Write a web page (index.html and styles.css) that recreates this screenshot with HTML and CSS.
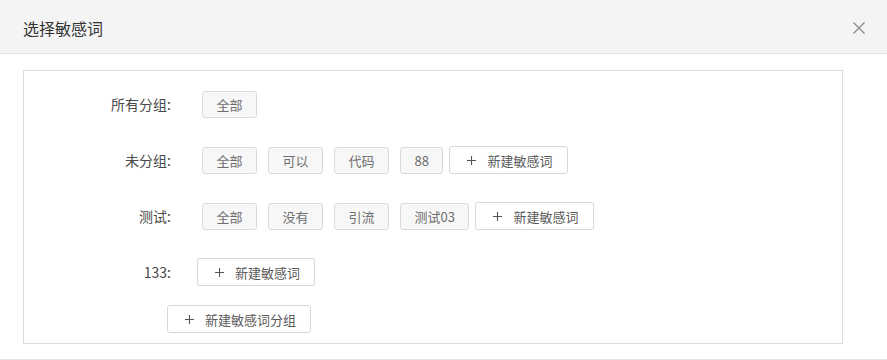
FILE: index.html
```html
<!DOCTYPE html>
<html lang="zh-CN">
<head>
<meta charset="utf-8">
<title>选择敏感词</title>
<link rel="stylesheet" href="styles.css">
</head>
<body>
<div class="dialog">
  <div class="dialog-header">
    <span class="dialog-title">选择敏感词</span>
    <button class="dialog-close" aria-label="关闭">
      <svg width="12" height="12" viewBox="0 0 12 12"><path d="M0.5 0.5 L11.5 11.5 M11.5 0.5 L0.5 11.5" stroke="#8a8a8a" stroke-width="1.3" fill="none"/></svg>
    </button>
  </div>
  <div class="dialog-body">
    <div class="group-box">
      <div class="group-row">
        <div class="group-label">所有分组:</div>
        <div class="group-items">
          <span class="tag">全部</span>
        </div>
      </div>
      <div class="group-row">
        <div class="group-label">未分组:</div>
        <div class="group-items">
          <span class="tag">全部</span>
          <span class="tag">可以</span>
          <span class="tag">代码</span>
          <span class="tag">88</span>
          <span class="add-btn"><svg class="plus" width="9" height="9" viewBox="0 0 9 9"><path d="M4.5 0 V9 M0 4.5 H9" stroke="#555" stroke-width="1.1" fill="none"/></svg>新建敏感词</span>
        </div>
      </div>
      <div class="group-row">
        <div class="group-label">测试:</div>
        <div class="group-items">
          <span class="tag">全部</span>
          <span class="tag">没有</span>
          <span class="tag">引流</span>
          <span class="tag">测试03</span>
          <span class="add-btn"><svg class="plus" width="9" height="9" viewBox="0 0 9 9"><path d="M4.5 0 V9 M0 4.5 H9" stroke="#555" stroke-width="1.1" fill="none"/></svg>新建敏感词</span>
        </div>
      </div>
      <div class="group-row">
        <div class="group-label">133:</div>
        <div class="group-items">
          <span class="add-btn"><svg class="plus" width="9" height="9" viewBox="0 0 9 9"><path d="M4.5 0 V9 M0 4.5 H9" stroke="#555" stroke-width="1.1" fill="none"/></svg>新建敏感词</span>
        </div>
      </div>
      <div class="group-add-row">
        <span class="add-btn add-group"><svg class="plus" width="9" height="9" viewBox="0 0 9 9"><path d="M4.5 0 V9 M0 4.5 H9" stroke="#555" stroke-width="1.1" fill="none"/></svg>新建敏感词分组</span>
      </div>
    </div>
  </div>
  <div class="dialog-footer"></div>
</div>
</body>
</html>
```

FILE: styles.css
```css
* { box-sizing: border-box; }
html, body {
  margin: 0;
  padding: 0;
  background: #ffffff;
  font-family: "Noto Sans CJK SC", "Noto Sans", sans-serif;
  color: #333;
}
.dialog {
  width: 887px;
  height: 360px;
  overflow: hidden;
  background: #fff;
}
.dialog-header {
  height: 54px;
  background: #f4f4f4;
  border-bottom: 1px solid #e4e4e4;
  display: flex;
  align-items: center;
  justify-content: space-between;
  padding: 0 22px 0 23px;
}
.dialog-title {
  font-size: 16px;
  color: #333;
  line-height: 1;
  position: relative;
  top: 1px;
}
.dialog-close {
  border: 0;
  background: transparent;
  padding: 0;
  width: 12px;
  height: 12px;
  display: flex;
  cursor: pointer;
  position: relative;
  top: 1px;
}
.dialog-body {
  padding: 16px 44px 15px 23px;
}
.group-box {
  border: 1px solid #dcdcdc;
  height: 274px;
  padding: 19px 0 0 0;
}
.group-row {
  display: flex;
  align-items: center;
  height: 28px;
  margin-bottom: 28px;
}
.group-label {
  width: 147px;
  text-align: right;
  font-size: 14px;
  color: #4a4a4a;
  line-height: 1;
}
.group-items {
  display: flex;
  align-items: center;
  margin-left: 20px;
}
.tag {
  display: inline-flex;
  align-items: center;
  height: 27px;
  padding: 0 13.5px;
  margin-left: 11px;
  border: 1px solid #dadada;
  border-radius: 3px;
  background: #f7f7f7;
  font-size: 13px;
  color: #6e6e6e;
  line-height: 1;
}
.add-btn {
  display: inline-flex;
  align-items: center;
  height: 28px;
  padding: 0 14px 0 17px;
  margin-left: 6px;
  border: 1px solid #d8d8d8;
  border-radius: 3px;
  background: #fff;
  font-size: 13px;
  color: #5a5a5a;
  line-height: 1;
}
.plus {
  margin-right: 11px;
  flex: none;
}
.group-add-row {
  display: flex;
  margin-top: -9px;
  padding-left: 143px;
}
.add-group {
  margin-left: 0;
}
.dialog-footer {
  border-top: 1px solid #e4e4e4;
  height: 10px;
}
```
